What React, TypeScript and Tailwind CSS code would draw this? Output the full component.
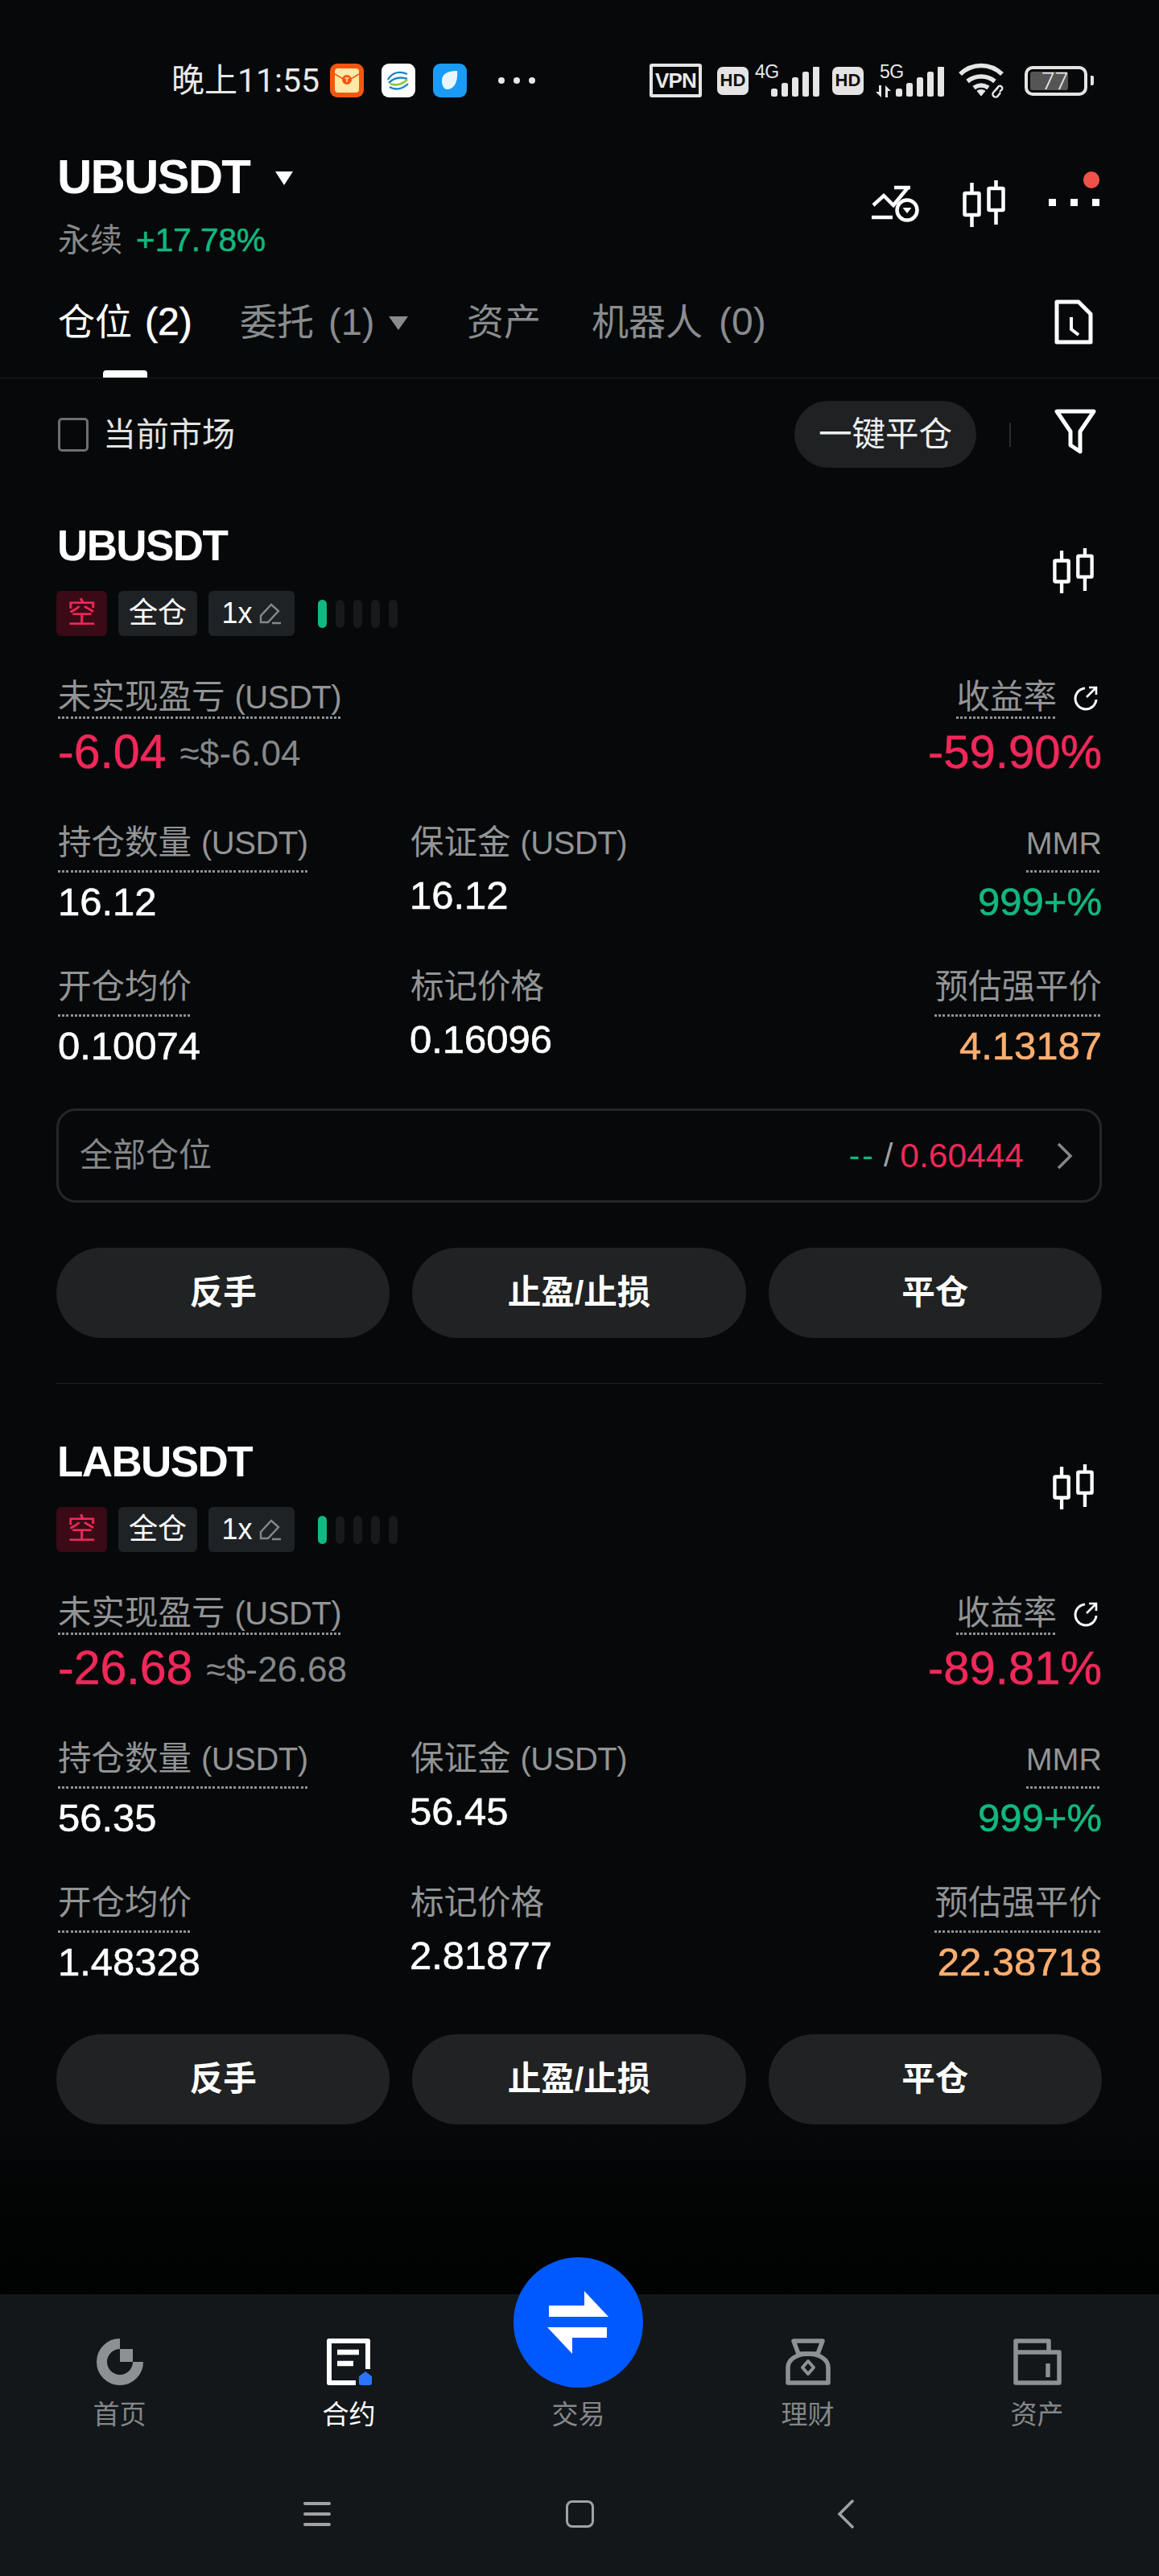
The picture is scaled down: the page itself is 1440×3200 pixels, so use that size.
import type { ReactNode } from 'react';

const RED = 'text-[#f0285a]';
// Reference numerals are a touch heavier than Liberation's regular cut.
const HEAVY = '[-webkit-text-stroke:0.6px_currentColor]';

function Signal() {
  // Ascending cellular bars, tallest on the right.
  return (
    <svg width="60" height="38" viewBox="0 0 60 38" fill="#e6e6e6">
      {[0, 1, 2, 3, 4].map((i) => {
        const h = 10 + i * 7;
        return <rect key={i} x={i * 13} y={37 - h} width="8" height={h} rx="2.5" />;
      })}
    </svg>
  );
}

function Candles({ className }: { className?: string }) {
  return (
    <svg className={className} viewBox="0 0 54 60" fill="none" stroke="#fff" strokeWidth="4.5">
      <rect x="2.5" y="17" width="18" height="27" rx="1" />
      <path d="M11.5 4v13M11.5 44v15" />
      <rect x="32.5" y="11" width="18" height="27" rx="1" />
      <path d="M41.5 1v10M41.5 38v18" />
    </svg>
  );
}

function StatusBar() {
  return (
    <div className="mt-[78px] h-[44px] flex items-center text-[#e8e8e8]">
      <span className="ml-[213px] w-[197px] font-['Roboto','Noto_Sans_CJK_SC',sans-serif] text-[41px] leading-[44px] whitespace-nowrap">
        晚上11:55
      </span>
      <svg width="42" height="42" viewBox="0 0 42 42">
        <rect width="42" height="42" rx="9" fill="#f4560f" />
        <rect x="6" y="6" width="30" height="30" rx="4" fill="#fde9a8" />
        <path d="M6 13l15 9 15-9" fill="none" stroke="#f4560f" strokeWidth="1.5" />
        <circle cx="21" cy="20" r="6" fill="#f4560f" />
        <path d="M18.5 18h5M21 18v5" stroke="#fde9a8" strokeWidth="1.4" />
      </svg>
      <svg className="ml-[22px]" width="42" height="42" viewBox="0 0 42 42" fill="none">
        <rect width="42" height="42" rx="9" fill="#fff" />
        <path d="M8 20c5-9 14-11 24-7M9 24c6-6 14-8 23-5" stroke="#1b87c9" strokeWidth="2.4" />
        <path d="M11 25c7 3 14 1 21-5" stroke="#8cc63f" strokeWidth="2.6" />
        <path d="M10 29c8 5 17 2 23-4" stroke="#1b87c9" strokeWidth="2.4" />
      </svg>
      <svg className="ml-[22px]" width="42" height="42" viewBox="0 0 42 42">
        <rect width="42" height="42" rx="9" fill="#1a9bf5" />
        <path d="M11 21c0-8 7-12 19-12 1 11-2 22-12 23-5 0-7-5-7-11z" fill="#eaf6ff" />
      </svg>
      <div className="ml-[39px] flex gap-[11px]">
        <span className="w-2 h-2 rounded-full bg-[#e8e8e8]" />
        <span className="w-2 h-2 rounded-full bg-[#e8e8e8]" />
        <span className="w-2 h-2 rounded-full bg-[#e8e8e8]" />
      </div>

      <div className="ml-[142px] w-[65px] h-[42px] border-[4px] border-[#e4e4e4] rounded-[3px] flex items-center justify-center text-[26px] font-bold tracking-[-0.8px] leading-none">
        VPN
      </div>
      <div className="ml-[19px] w-[39px] h-[35px] rounded-[7px] bg-[#e4e4e4] flex items-center justify-center text-[#111] text-[22px] font-bold leading-none">
        HD
      </div>
      <div className="relative ml-[28px] w-[60px] h-[44px]">
        <span className="absolute -left-[20px] -top-[1px] text-[23px] leading-[24px] tracking-[-0.5px]">4G</span>
        <div className="absolute bottom-[1px] left-0">
          <Signal />
        </div>
      </div>
      <div className="ml-[16px] w-[39px] h-[35px] rounded-[7px] bg-[#e4e4e4] flex items-center justify-center text-[#111] text-[22px] font-bold leading-none">
        HD
      </div>
      <div className="relative ml-[40px] w-[58px] h-[44px]">
        <span className="absolute -left-[20px] -top-[1px] text-[23px] leading-[24px] tracking-[-0.5px]">5G</span>
        <svg className="absolute -left-[25px] bottom-[1px]" width="20" height="15" viewBox="0 0 20 15" fill="#e6e6e6">
          <path d="M7 0v15L0 8h4V0zM12 15V0l7 7h-4v8z" />
        </svg>
        <div className="absolute bottom-[1px] left-0">
          <Signal />
        </div>
      </div>
      <svg className="ml-[19px]" width="62" height="46" viewBox="0 0 62 46" fill="none" stroke="#e6e6e6">
        <path d="M3 15c15-14 37-14 52 0" strokeWidth="5.5" />
        <path d="M12 24c10-8 24-8 34 0" strokeWidth="5.5" />
        <path d="M20 32c6-4 12-4 18 0" strokeWidth="5.5" />
        <path d="M24 36l5 6 5-6c-3-2-7-2-10 0z" fill="#e6e6e6" strokeWidth="1" />
        <path d="M44 38l7-8a3 3 0 014 4l-3 3M50 32l-6 6M53 38l-3 4a3.5 3.5 0 01-6-4" strokeWidth="2.4" />
      </svg>
      <div className="ml-[21px] relative w-[78px] h-[37px] border-[4px] border-[#e4e4e4] rounded-[10px] p-[3px]">
        <div className="w-[47px] h-[23px] bg-[#555] rounded-[3px]" />
        <span className="absolute left-[17px] top-[-2px] text-[30px] leading-[34px] font-['Roboto',sans-serif] font-light text-[#eee]">
          77
        </span>
      </div>
      <div className="ml-[4px] w-[4px] h-[12px] rounded-r-[2px] bg-[#e4e4e4]" />
    </div>
  );
}

function Header() {
  return (
    <div>
      <div className="mt-[68px] pl-[71px] pr-[74px] flex justify-between">
        <div>
          <div className="flex items-center h-[60px]">
            <span className="text-[60px] leading-[60px] font-bold tracking-[-1.8px] text-white">UBUSDT</span>
            <span className="ml-[32px] mt-[3px] w-0 h-0 border-l-[11.5px] border-r-[11.5px] border-t-[17px] border-l-transparent border-r-transparent border-t-white" />
          </div>
          <div className="mt-[26px] pl-[1px] h-[44px] flex items-center text-[40px] leading-[44px] text-[#85888a]">
            永续
            <span className={`ml-[17px] text-[40.5px] text-[#12b77f] ${HEAVY}`}>+17.78%</span>
          </div>
        </div>
        <div className="relative flex items-start pt-[38px]">
          <svg width="60" height="50" viewBox="0 0 60 50" fill="none" stroke="#fff" strokeWidth="4.5">
            <path d="M2 27l13-12 12 12 18-22" />
            <path d="M28 5h20" />
            <path d="M0 42h26" />
            <circle cx="44" cy="33" r="12.5" />
            <path d="M38.5 30h11L44 37z" fill="#fff" strokeWidth="0" />
          </svg>
          <Candles className="ml-[53px] w-[54px] h-[60px] -mt-[5px]" />
          <div className="ml-[53px] mt-[19px] flex gap-[18px]">
            <span className="w-[9px] h-[9px] bg-white" />
            <span className="w-[9px] h-[9px] bg-white" />
            <span className="w-[9px] h-[9px] bg-white" />
          </div>
          <span className="absolute right-0 top-[23px] w-[20px] h-[21px] rounded-full bg-[#f0524a]" />
        </div>
      </div>

      <div className="relative h-[150px] pt-[56px] pl-[72px] pr-[82px] flex border-b border-[#1e2123] text-[46px] leading-[48px] text-[#898c8e]">
        <span className="text-white w-[226px] flex">
          仓位
          <span className={`ml-[16px] text-[48px] ${HEAVY}`}>(2)</span>
        </span>
        <span className="w-[282px] flex items-start">
          委托
          <span className="ml-[18px] text-[47px]">(1)</span>
          <span className="ml-[18px] mt-[17px] w-0 h-0 border-l-[12px] border-r-[12px] border-t-[17px] border-l-transparent border-r-transparent border-t-[#898c8e]" />
        </span>
        <span className="w-[155px]">资产</span>
        <span className="flex">
          机器人
          <span className="ml-[20px] text-[48px]">(0)</span>
        </span>
        <svg className="ml-auto -mt-[4px]" width="48" height="56" viewBox="0 0 48 56" fill="none" stroke="#fff" strokeWidth="5">
          <path d="M3 3h27l15 15v35H3z" strokeLinejoin="round" />
          <path d="M21 22v15l9 7" strokeWidth="4" />
        </svg>
        <span className="absolute left-[128px] bottom-0 w-[55px] h-[9px] rounded-t-[4px] bg-white" />
      </div>

      <div className="mt-[28px] pl-[72px] pr-[78px] h-[83px] flex items-center">
        <span className="w-[38px] h-[42px] border-[3px] border-[#6c6e70] rounded-[5px]" />
        <span className="ml-[18px] text-[41px] text-[#e2e3e3] leading-[48px]">当前市场</span>
        <button className="ml-auto w-[226px] h-[83px] rounded-full bg-[#1f2123] text-[41.5px] text-[#eeeeee] leading-none">
          一键平仓
        </button>
        <span className="ml-[41px] w-[2px] h-[30px] bg-[#2a2c2e]" />
        <svg className="ml-[54px] -mt-[8px]" width="52" height="58" viewBox="0 0 52 58" fill="none" stroke="#fff" strokeWidth="5" strokeLinejoin="round">
          <path d="M3 4h46L32 29v25l-12-8V29z" />
        </svg>
      </div>
    </div>
  );
}

function Dots() {
  return (
    <div className="h-[3px] w-full bg-[repeating-linear-gradient(90deg,#8f9193_0_3px,transparent_3px_5.2px)]" />
  );
}

function Label({ children, unit, gap }: { children: ReactNode; unit?: string; gap: string }) {
  return (
    <div className="inline-block">
      <div className={`h-[40px] text-[41.5px] leading-[40px] text-[#929496] whitespace-nowrap ${gap}`}>
        {children}
        {unit && <span className="ml-[12px] text-[40px] tracking-[-0.5px]">{unit}</span>}
      </div>
      <Dots />
    </div>
  );
}

function Stat({
  label,
  unit,
  value,
  right,
  color = 'text-white',
}: {
  label: ReactNode;
  unit?: string;
  value: string;
  right?: boolean;
  color?: string;
}) {
  return (
    <div className={right ? 'text-right' : ''}>
      <Label unit={unit} gap="mb-[14px]">
        {label}
      </Label>
      <div className={`mt-[8px] text-[49px] leading-[56px] ${HEAVY} ${color}`}>{value}</div>
    </div>
  );
}

function PlainStat({ label, unit, value }: { label: string; unit?: string; value: string }) {
  return (
    <div>
      <div className="h-[40px] text-[41.5px] leading-[40px] text-[#929496] whitespace-nowrap">
        {label}
        {unit && <span className="ml-[12px] text-[40px] tracking-[-0.5px]">{unit}</span>}
      </div>
      <div className={`mt-[17px] -ml-[1px] text-[49px] leading-[56px] text-white ${HEAVY}`}>{value}</div>
    </div>
  );
}

type Position = {
  symbol: string;
  pnl: string;
  pnlUsd: string;
  roe: string;
  size: string;
  margin: string;
  entry: string;
  mark: string;
  liq: string;
  showAll?: boolean;
};

function ActionButton({ children }: { children: ReactNode }) {
  return (
    <button className="h-[112px] rounded-full bg-[#202223] text-[41.5px] font-semibold text-white leading-none">
      {children}
    </button>
  );
}

function PositionCard({ p }: { p: Position }) {
  return (
    <div className="pl-[70px] pr-[71px]">
      <div className="mt-[67px] flex justify-between">
        <div className="pl-[1px] h-[60px] text-[53px] leading-[60px] font-bold tracking-[-1.6px] text-white">{p.symbol}</div>
        <Candles className="mt-[32px] mr-[9px] w-[52px] h-[58px]" />
      </div>

      <div className="-mt-[4px] h-[56px] flex items-center">
        <span className="w-[63px] h-[56px] rounded-[6px] bg-[#3a0a16] text-[#f0285a] text-[36px] flex items-center justify-center">空</span>
        <span className="ml-[14px] w-[98px] h-[56px] rounded-[6px] bg-[#1f2225] text-white text-[36px] flex items-center justify-center">全仓</span>
        <span className="ml-[14px] w-[107px] h-[56px] rounded-[6px] bg-[#1f2225] text-white text-[36px] flex items-center justify-center">
          1x
          <svg className="ml-[8px]" width="28" height="28" viewBox="0 0 28 28" fill="none" stroke="#85888a" strokeWidth="2.4">
            <path d="M2 25v-8L15 3l9 8-13 14zM16 26h11" />
          </svg>
        </span>
        <div className="ml-[29px] flex gap-[11px]">
          <span className="w-[11px] h-[35px] rounded-full bg-[#10b981]" />
          <span className="w-[11px] h-[35px] rounded-full bg-[#17191b]" />
          <span className="w-[11px] h-[35px] rounded-full bg-[#17191b]" />
          <span className="w-[11px] h-[35px] rounded-full bg-[#17191b]" />
          <span className="w-[11px] h-[35px] rounded-full bg-[#17191b]" />
        </div>
      </div>

      <div className="mt-[56px] pl-[2px] flex justify-between">
        <div>
          <Label unit="(USDT)" gap="mb-[4px]">
            未实现盈亏
          </Label>
          <div className="mt-[11px] h-[60px] flex items-center">
            <span className={`text-[59px] leading-[60px] ${HEAVY} ${RED}`}>{p.pnl}</span>
            <span className="ml-[17px] mt-[4px] text-[44px] leading-[60px] tracking-[0.2px] text-[#85888a]">{p.pnlUsd}</span>
          </div>
        </div>
        <div className="flex flex-col items-end">
          <div className="flex items-start">
            <Label gap="mb-[4px]">收益率</Label>
            <svg className="ml-[20px] mr-[4px] mt-[5px]" width="32" height="32" viewBox="0 0 32 32" fill="none" stroke="#fff" strokeWidth="3">
              <path d="M15 4a13 13 0 1014 14" />
              <path d="M17 15L29 3M20 3h9v9" strokeWidth="2.6" />
            </svg>
          </div>
          <div className={`mt-[11px] text-[58px] leading-[60px] ${HEAVY} ${RED}`}>{p.roe}</div>
        </div>
      </div>

      <div className="mt-[63px] pl-[2px] grid grid-cols-[438px_1fr_auto]">
        <Stat label="持仓数量" unit="(USDT)" value={p.size} />
        <PlainStat label="保证金" unit="(USDT)" value={p.margin} />
        <Stat label={<span className="text-[39.5px]">MMR</span>} value="999+%" right color="text-[#12b77f]" />
      </div>

      <div className="mt-[58px] pl-[2px] grid grid-cols-[438px_1fr_auto]">
        <Stat label="开仓均价" value={p.entry} />
        <PlainStat label="标记价格" value={p.mark} />
        <Stat label="预估强平价" value={p.liq} right color="text-[#fdae6f]" />
      </div>

      {p.showAll && (
        <div className="mt-[50px] h-[117px] pl-[26px] pr-[32px] flex items-center rounded-[24px] border-[3px] border-[#24272a]">
          <span className="text-[41px] text-[#85888a]">全部仓位</span>
          <span className="ml-auto text-[41px] tracking-[3px] text-[#12b77f]">--</span>
          <span className="ml-[10px] text-[41px] text-[#a0a2a4]">/</span>
          <span className={`ml-[9px] text-[42.5px] ${RED}`}>0.60444</span>
          <svg className="ml-[40px]" width="22" height="34" viewBox="0 0 22 34" fill="none" stroke="#85888a" strokeWidth="3.5">
            <path d="M3 2l15 15L3 32" />
          </svg>
        </div>
      )}

      <div className={`${p.showAll ? 'mt-[56px]' : 'mt-[62px]'} grid grid-cols-3 gap-[28px]`}>
        <ActionButton>反手</ActionButton>
        <ActionButton>止盈/止损</ActionButton>
        <ActionButton>平仓</ActionButton>
      </div>
    </div>
  );
}

function BottomNav() {
  return (
    <div className="relative h-[350px] bg-[#14171a]">
      <div className="absolute left-[638px] -top-[46px] w-[161px] h-[162px] rounded-full bg-[#0059ff] flex items-center justify-center">
        <svg width="78" height="78" viewBox="0 0 78 78" fill="#fff">
          <path d="M2 18h44V0l30 32H2z" />
          <path d="M0 45h74v13H31v20z" />
        </svg>
      </div>

      <div className="pt-[55px] pl-[6px] pr-[9px] grid grid-cols-5 text-[33px] leading-[36px] text-[#84878a] text-center">
        <div className="flex flex-col items-center">
          <svg width="58" height="58" viewBox="0 0 58 58" fill="none">
            <path d="M29 6.5A22.5 22.5 0 1 0 51.5 29" stroke="#8e9194" strokeWidth="13" />
            <rect x="29" y="13" width="16" height="16" fill="#8e9194" />
          </svg>
          <span className="mt-[19px]">首页</span>
        </div>
        <div className="flex flex-col items-center text-white">
          <svg width="58" height="58" viewBox="0 0 58 58" fill="none">
            <path d="M52 38V3H4v52h33" stroke="#fff" strokeWidth="6" strokeLinejoin="round" />
            <path d="M14 17h27M14 31h20" stroke="#fff" strokeWidth="6.5" />
            <path d="M49 41l8 6v10l-8 3-8-3V47z" fill="#2b74ff" />
          </svg>
          <span className="mt-[19px]">合约</span>
        </div>
        <div className="flex flex-col items-center">
          <div className="h-[58px]" />
          <span className="mt-[19px]">交易</span>
        </div>
        <div className="flex flex-col items-center">
          <svg width="58" height="58" viewBox="0 0 58 58" fill="none" stroke="#8e9194" strokeWidth="5.5" strokeLinejoin="round">
            <path d="M11 3h36l-6 16H17z" />
            <path d="M4 55V36c0-10 11-17 25-17s25 7 25 17v19z" />
            <path d="M29 28l7 8-7 8-7-8z" strokeWidth="4" />
          </svg>
          <span className="mt-[19px]">理财</span>
        </div>
        <div className="flex flex-col items-center">
          <svg width="60" height="58" viewBox="0 0 60 58" fill="none" stroke="#8e9194" strokeWidth="5.5" strokeLinejoin="round">
            <path d="M3 55V3h41v14h13v38z" />
            <path d="M3 17h41" />
            <path d="M43 31v17" />
          </svg>
          <span className="mt-[19px]">资产</span>
        </div>
      </div>

      <div className="mt-[85px] pl-[377px] h-[40px] flex items-center">
        <div className="w-[34px] flex flex-col gap-[9px]">
          <span className="h-[4px] rounded-full bg-[#a0a2a4]" />
          <span className="h-[4px] rounded-full bg-[#a0a2a4]" />
          <span className="h-[4px] rounded-full bg-[#a0a2a4]" />
        </div>
        <span className="ml-[292px] w-[35px] h-[34px] rounded-[8px] border-[3.5px] border-[#a0a2a4]" />
        <svg className="ml-[302px]" width="22" height="36" viewBox="0 0 22 36" fill="none" stroke="#a0a2a4" strokeWidth="3.5" strokeLinecap="round">
          <path d="M19 2L3 18l16 16" />
        </svg>
      </div>
    </div>
  );
}

const positions: Position[] = [
  {
    symbol: 'UBUSDT',
    pnl: '-6.04',
    pnlUsd: '≈$-6.04',
    roe: '-59.90%',
    size: '16.12',
    margin: '16.12',
    entry: '0.10074',
    mark: '0.16096',
    liq: '4.13187',
    showAll: true,
  },
  {
    symbol: 'LABUSDT',
    pnl: '-26.68',
    pnlUsd: '≈$-26.68',
    roe: '-89.81%',
    size: '56.35',
    margin: '56.45',
    entry: '1.48328',
    mark: '2.81877',
    liq: '22.38718',
  },
];

export default function App() {
  return (
    <div className="w-[1440px] h-[3200px] flex flex-col bg-[#060809] font-['Liberation_Sans','Noto_Sans_CJK_SC',sans-serif] overflow-hidden">
      <StatusBar />
      <Header />
      <PositionCard p={positions[0]} />
      <div className="mt-[56px] mx-[70px] h-px bg-[#1f2123]" />
      <PositionCard p={positions[1]} />
      <div className="flex-1 bg-gradient-to-b from-[#060809] to-[#010202]" />
      <BottomNav />
    </div>
  );
}
